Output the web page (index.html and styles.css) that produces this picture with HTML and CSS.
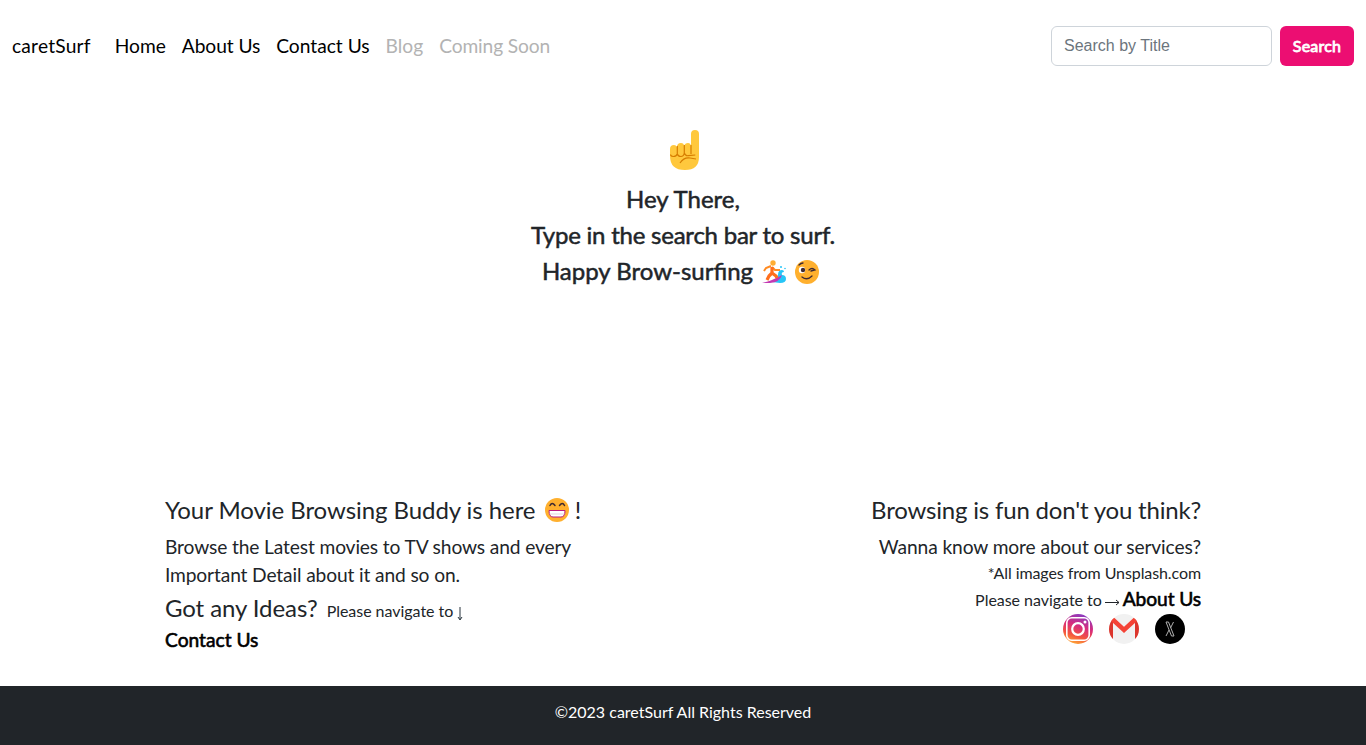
FILE: index.html
```html
<!DOCTYPE html>
<html lang="en">
<head>
<meta charset="utf-8">
<title>caretSurf</title>
<link rel="stylesheet" href="styles.css">
</head>
<body>
<header class="navbar">
  <a class="brand">caretSurf</a>
  <nav class="links"><a>Home</a><a class="about-link">About Us</a><a>Contact Us</a><a class="off">Blog</a><a class="off soon">Coming Soon</a></nav>
  <form class="search"><input class="field" type="search" placeholder="Search by Title"><button class="btn" type="button">Search</button></form>
</header>
<main class="hero">
  <svg class="finger" viewBox="0 0 30 40"><path d="M21 17V4Q21 0 25 0t4 4v23Q29 40 15 40 0 40 0 26V19q0-4 4-4 2 0 3 2 0-4 4-4 3 0 3 3 1-3 4-3 3 0 3 4z" fill="#ffc83d"/><path d="M7.300 16v8q-1 2.500-4 2.500-2 0-3-2m7-.5q1 2.500 3.500 2.500 3 0 3.500-3.500v-8m0 8q1 3 4 2.700l7-.7M10 33q4-6 10-5l6 1M21 15v9" fill="none" stroke="#d67d00" stroke-width="1.200"/></svg>
  <p>Hey There,</p>
  <p class="tight">Type in the search bar to surf.</p>
  <p class="emoji-line">Happy Brow-surfing
    <svg class="surfer" viewBox="0 0 24 24"><path d="M10 22Q15 19 16 15q0-5 4-5 2 0 2 2-3 0-2 3 4 0 4 4t-6 4z" fill="#26c5f7"/><circle cx="19" cy="7" r="1" fill="#26c5f7"/><circle cx="23" cy="8.500" r=".8" fill="#26c5f7"/><path d="M0 23Q12 20 20 15q-2 7-12 8z" fill="#c239b3"/><path d="M9 6L4 8l-2 3m8-4l3 3 5 0" fill="none" stroke="#ff8b22" stroke-width="2"/><path d="M10 7v6l-3 3-2 4m5-7l4 3 1 2" fill="none" stroke="#ff6f1d" stroke-width="3.200" stroke-linejoin="round"/><circle cx="11" cy="3" r="2.700" fill="#ffad32"/></svg>
    <svg class="wink" viewBox="0 0 24 24"><circle cx="12" cy="12" r="12" fill="#ffb02e"/><circle cx="7" cy="10" r="3.200" fill="#fff"/><circle cx="8" cy="10" r="2.200" fill="#402a32"/><path d="M4 5q2-2 4-2m6 7q3-3 6 0l-4 1M7 17q5 4 10-1" fill="none" stroke="#402a32" stroke-width="1.300" stroke-linecap="round"/></svg>
  </p>
</main>
<section class="info">
  <div class="col">
    <h4 class="title left-title">Your Movie Browsing Buddy is here <svg class="grin" viewBox="0 0 24 24"><circle cx="12" cy="12" r="12" fill="#ffb02e"/><path d="M5 7.500q2-4 5 0m4.500 0q3-4 5 0" fill="none" stroke="#402a32" stroke-width="1.500" stroke-linecap="round"/><path d="M4 12.500h16q0 6.500-4 6.500H8q-4 0-4-6.500z" fill="#fff" stroke="#bb1d80"/><path d="M4.500 16h15" stroke="#d7bfd0" stroke-width=".7"/></svg> !</h4>
    <p class="lead">Browse the Latest movies to TV shows and every<br>Important Detail about it and so on.</p>
    <div class="ideas"><span class="big">Got any Ideas?</span><span class="small">Please navigate to <svg class="down" viewBox="0 0 6 14"><path d="M3 0v12M1 10l2 3 2-3" fill="none" stroke="#26333c"/></svg></span></div>
    <a class="strong contact">Contact Us</a>
  </div>
  <div class="col right">
    <h4 class="title right-title">Browsing is fun don't you think?</h4>
    <p class="wanna">Wanna know more about our services?</p>
    <p class="small credit">*All images from Unsplash.com</p>
    <div class="about"><span class="small">Please navigate to</span><svg class="arrow" viewBox="0 0 15 8"><path d="M0 4.500h14M11 2l3 2.500L11 7" fill="none" stroke="#212529"/></svg><a class="strong about-strong">About Us</a></div>
    <div class="social">
      <svg viewBox="0 0 30 30"><defs><linearGradient id="ig" x1=".25" y1="1" x2=".6" y2="0"><stop stop-color="#ffb437"/><stop offset=".3" stop-color="#f4543e"/><stop offset=".62" stop-color="#d72c7d"/><stop offset="1" stop-color="#8b3ac0"/></linearGradient></defs><circle cx="15" cy="15" r="15" fill="url(#ig)"/><rect x="3.800" y="3.800" width="22.400" height="22.400" rx="5" fill="none" stroke="#fff" stroke-width="1.600"/><circle cx="15" cy="15" r="5.800" fill="none" stroke="#fff" stroke-width="2.200"/><circle cx="22" cy="8" r="1.500" fill="#fff"/></svg>
      <svg viewBox="0 0 30 30"><defs><clipPath id="disc"><circle cx="15" cy="15" r="15"/></clipPath></defs><g clip-path="url(#disc)"><path d="M0 0h30v30H0z" fill="#f1f1f1"/><path d="M0 5h4v20H0zM26 5h4v20h-4z" fill="#dc352c"/><path d="M1 3l14 13L29 3" fill="none" stroke="#f44336" stroke-width="4.500"/></g></svg>
      <svg viewBox="0 0 30 30"><circle cx="15" cy="15" r="15" fill="#000"/><path d="M11 8h2.500l5.500 14h-2.500zM18.500 8l-3 6M14 16l-3 6" fill="none" stroke="#b0b0b0"/></svg>
    </div>
  </div>
</section>
<footer class="footer">©2023 caretSurf All Rights Reserved</footer>
</body>
</html>
```
FILE: styles.css
```css
*{box-sizing:border-box}
body{margin:0;height:745px;display:flex;flex-direction:column;font-family:Lato,sans-serif;font-size:16px;line-height:24px;color:#212529;background:#fff;overflow:hidden}
p,h4{margin:0}
svg{flex:none}
.navbar{height:92px;flex:none;display:flex;align-items:center;padding:0 12px;font-size:19.2px;color:#000}
.brand{margin-right:24px;letter-spacing:.2px}
.links{display:flex;gap:16px}
.about-link{letter-spacing:-.08px}
.off{color:#b3b3b3}
.soon{letter-spacing:-.12px}
.search{margin-left:auto;display:flex;gap:8px}
.field{width:221px;height:40px;border:1px solid #ced4da;border-radius:6px;padding:0 12px;font:16px "Liberation Sans",sans-serif;background:#fff}
.field::placeholder{color:#6c757d;opacity:1}
.btn{width:74px;height:40px;border:0;border-radius:6px;padding:0 0 2px;background:#ec0e72;color:#fff;font:16px Lato,sans-serif;letter-spacing:.2px;-webkit-text-stroke:.8px #fff}
.hero{flex:1;padding-top:38px;text-align:center;font-size:24px;line-height:36px;-webkit-text-stroke:.5px #212529}
.hero svg{-webkit-text-stroke:0}
.finger{display:block;width:30px;height:40px;margin:0 auto 11px;transform:translateX(2px)}
.tight{letter-spacing:-.23px}
.emoji-line{display:flex;justify-content:center;align-items:center;gap:9px;padding-right:5px}
.surfer,.wink{width:24px;height:24px;margin-top:2px}
.info{height:192px;flex:none;display:flex;justify-content:space-between;padding:0 165px}
.col{display:flex;flex-direction:column;align-items:flex-start}
.right{align-items:flex-end}
.title{font-size:24px;font-weight:400;line-height:29px;margin-top:1px;margin-bottom:9px;display:flex;align-items:center;gap:4px;white-space:pre}
.left-title{letter-spacing:-.06px}
.right-title{letter-spacing:-.19px}
.grin{width:24px;height:24px;margin:1px -4px 0 -1px}
.lead{font-size:19.2px;line-height:28px;letter-spacing:-.13px}
.ideas{display:flex;align-items:baseline;gap:9px;height:39px;line-height:38px}
.big{font-size:24px;letter-spacing:-.08px}
.small{font-size:16px;letter-spacing:-.03px}
.down{width:6px;height:14px;vertical-align:-4px}
.strong{font-size:19.2px;color:#000;-webkit-text-stroke:.6px #000}
.about-strong{letter-spacing:-.1px}
.wanna{font-size:19.2px;line-height:28px;letter-spacing:-.1px}
.credit{height:25px;line-height:23px;letter-spacing:-.09px}
.about{display:flex;align-items:baseline;gap:3px;height:28px;line-height:26px}
.arrow{width:15px;height:8px}
.social{display:flex;gap:16px;padding-right:16px}
.social svg{width:30px;height:30px}
.footer{height:59px;flex:none;background:#212529;color:#fff;text-align:center;line-height:52px;font-size:16px}
```
